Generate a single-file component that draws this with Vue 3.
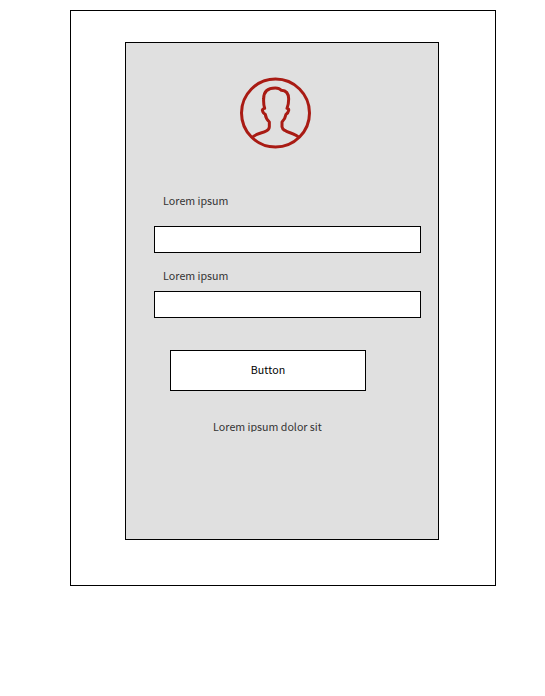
<script setup>
const fields = [
  { id: 'first', label: 'Lorem ipsum' },
  { id: 'second', label: 'Lorem ipsum' },
]
</script>

<template>
  <main class="frame">
    <form class="panel" @submit.prevent>
      <svg class="avatar" viewBox="27 21 219 219" aria-hidden="true">
        <circle cx="136.500" cy="129" r="102" />
        <path d="M66 203C77 190 97 190 110 182Q118 177 118 170V156Q107 145 106 133Q99 130 97 120Q98 116 104 115Q100 103 101 86C101 65 113 54 136 54C144 54 150 56 154 61C168 62 176 72 176 87Q176 104 171 115Q177 116 176 121Q174 130 168 133Q166 146 156 156V170Q157 177 164 181C177 190 196 190 207 203" />
      </svg>
      <div v-for="field in fields" :key="field.id" class="field" :class="field.id">
        <label :for="field.id">{{ field.label }}</label>
        <input :id="field.id" type="text" />
      </div>
      <button type="submit">Button</button>
      <p class="note">Lorem ipsum dolor sit</p>
    </form>
  </main>
</template>

<style>
body {
  background: #fff;
}
</style>

<style scoped>
.frame,
.panel,
.field input,
button {
  box-sizing: border-box;
  border: 1px solid #000;
}
.frame {
  width: 426px;
  height: 576px;
  margin: 10px 0 0 70px;
  padding: 31px 0 0 54px;
  display: flow-root;
  font: 10.6667px/18px "Noto Sans CJK SC", "Noto Sans", sans-serif;
  font-kerning: none;
  color: #333;
}
.panel {
  width: 314px;
  height: 498px;
  padding-top: 34px;
  display: flex;
  flex-direction: column;
  align-items: flex-start;
  background: #e0e0e0;
}
.avatar {
  width: 73px;
  height: 73px;
  margin-left: 113px;
  flex: none;
  fill: none;
  stroke: #a91b14;
  stroke-width: 9;
  stroke-linejoin: round;
}
.field {
  display: flex;
  flex-direction: column;
  margin-left: 28px;
}
.field label {
  height: 18px;
  margin-left: 9px;
}
.field input {
  width: 267px;
  height: 27px;
  padding: 0 8px;
  border-radius: 0;
  background: #fff;
  font: inherit;
}
.first {
  margin-top: 42px;
  gap: 16px;
}
.second {
  margin-top: 14px;
  gap: 6px;
}
button {
  width: 196px;
  height: 41px;
  margin: 32px 0 0 44px;
  padding: 0 0 2px;
  border-radius: 0;
  background: #fff;
  font: inherit;
  color: #000;
}
.note {
  height: 14px;
  margin: 27px 0 0 87px;
  overflow: hidden;
  white-space: nowrap;
}
</style>
